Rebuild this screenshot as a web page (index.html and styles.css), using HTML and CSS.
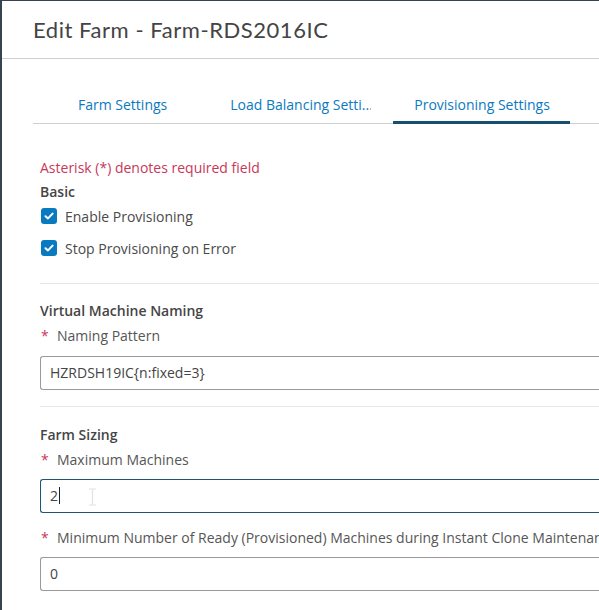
FILE: index.html
```html
<!DOCTYPE html>
<html lang="en">
<head>
    <meta charset="UTF-8">
    <meta name="viewport" content="width=device-width, initial-scale=1.0">
    <title>Edit Farm</title>
    <link rel="stylesheet" href="styles.css">
</head>
<body>
    <div class="modal">
        <div class="modal-header">
            <h3 class="modal-title">Edit Farm - Farm-RDS2016IC</h3>
        </div>

        <div class="modal-body">
            <ul class="tabs">
                <li class="tab">Farm Settings</li>
                <li class="tab tab-lb"><span class="tab-text">Load Balancing Setti...</span></li>
                <li class="tab active">Provisioning Settings</li>
            </ul>

            <form class="form">
                <div class="required-note">Asterisk (*) denotes required field</div>

                <section class="section first">
                    <div class="section-title">Basic</div>
                    <label class="check-row">
                        <span class="checkbox"><svg width="10" height="8" viewBox="0 0 10 8"><path d="M1.5 4.2 L4 6.4 L8.6 1.6" fill="none" stroke="#fff" stroke-width="2" stroke-linecap="round" stroke-linejoin="round"/></svg></span>
                        Enable Provisioning
                    </label>
                    <label class="check-row">
                        <span class="checkbox"><svg width="10" height="8" viewBox="0 0 10 8"><path d="M1.5 4.2 L4 6.4 L8.6 1.6" fill="none" stroke="#fff" stroke-width="2" stroke-linecap="round" stroke-linejoin="round"/></svg></span>
                        Stop Provisioning on Error
                    </label>
                </section>

                <section class="section">
                    <div class="section-title">Virtual Machine Naming</div>
                    <div class="field-label"><span class="req">*</span>Naming Pattern</div>
                    <div class="input">HZRDSH19IC{n:fixed=3}</div>
                </section>

                <section class="section sizing">
                    <div class="section-title">Farm Sizing</div>
                    <div class="field-label"><span class="req">*</span>Maximum Machines</div>
                    <div class="input focused">2<span class="caret"></span>
                        <svg class="ibeam" width="9" height="18" viewBox="0 0 9 18"><path d="M1 1 H8 M4.5 1 V17 M1 17 H8" stroke="#e2e2e2" stroke-width="1.2" fill="none"/></svg>
                    </div>
                    <div class="field-label second"><span class="req">*</span>Minimum Number of Ready (Provisioned) Machines during Instant Clone Maintenance</div>
                    <div class="input last">0</div>
                </section>
            </form>
        </div>
    </div>
</body>
</html>
```

FILE: styles.css
```css
html, body {
    margin: 0;
    height: 100%;
    overflow: hidden;
}
body {
    background-color: #37434e;
    font-family: "Open Sans", Arial, sans-serif;
    font-size: 14px;
    color: #454545;
}
.modal {
    margin: 1px 0 0 2px;
    width: 597px;
    height: 100%;
    overflow: hidden;
    background: #fff;
}
.modal-header {
    height: 57px;
    border-bottom: 1px solid #cfcfcf;
    padding-left: 31px;
    display: flex;
    align-items: center;
}
.modal-title {
    margin: 0;
    font-family: Lato, "Open Sans", sans-serif;
    font-size: 22px;
    font-weight: 400;
    color: #444;
    letter-spacing: 0.55px;
}
.modal-body {
    padding-left: 31px;
}
.tabs {
    list-style: none;
    margin: 0;
    padding: 29px 0 0 24px;
    display: flex;
    border-bottom: 1px solid #cfcfcf;
}
.tab {
    height: 33px;
    line-height: 33px;
    padding: 0 21px;
    margin-bottom: -1px;
    border-bottom: 3px solid transparent;
    color: #0a7ac0;
    white-space: nowrap;
}
.tab-lb {
    margin-left: 21px;
}
.tab-text {
    display: inline-block;
    width: 141px;
    overflow: hidden;
    vertical-align: top;
}
.tab.active {
    margin-left: 1px;
    width: 135px;
    border-bottom-color: #17506e;
}
.form {
    padding: 32px 0 0 7px;
}
.required-note {
    line-height: 24px;
    color: #c8385a;
}
.section {
    border-top: 1px solid #e6e6e6;
    padding-top: 15px;
}
.section.first {
    border-top: none;
    padding-top: 0;
    padding-bottom: 23px;
}
.section.sizing {
    padding-top: 16px;
}
.section-title {
    line-height: 24px;
    font-weight: 600;
    color: #454545;
}
.check-row {
    display: flex;
    align-items: center;
    height: 24px;
    color: #4a4a4a;
}
.check-row + .check-row {
    margin-top: 8px;
}
.checkbox {
    width: 16px;
    height: 16px;
    margin: 0 8px 0 1px;
    border-radius: 3px;
    background-color: #0a7ac0;
    display: flex;
    align-items: center;
    justify-content: center;
}
.field-label {
    margin-top: 1px;
    line-height: 24px;
    color: #565656;
}
.field-label.second {
    margin-top: 13px;
    white-space: nowrap;
}
.req {
    color: #c8385a;
    display: inline-block;
    width: 17px;
    padding-left: 1px;
    box-sizing: border-box;
}
.input {
    position: relative;
    margin: 8px 0 16px 0;
    height: 32px;
    line-height: 32px;
    padding-left: 9px;
    border: 1px solid #9a9a9a;
    border-right: none;
    border-radius: 3px 0 0 3px;
    color: #454545;
}
.input.focused {
    margin-top: 7px;
    border-color: #1d5573;
    margin-bottom: 0;
}
.input.last {
    margin-top: 7px;
}
.caret {
    display: inline-block;
    width: 1px;
    height: 17px;
    margin-left: 1px;
    background: #222;
    vertical-align: -3px;
}
.ibeam {
    position: absolute;
    left: 47px;
    top: 8px;
}
```
